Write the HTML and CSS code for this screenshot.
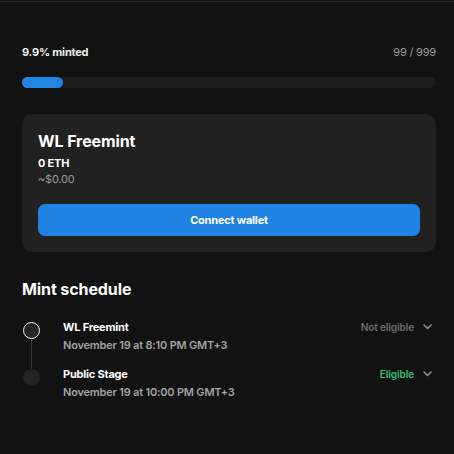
FILE: index.html
```html
<!DOCTYPE html>
<html>
<head>
<meta charset="utf-8">
<link rel="stylesheet" href="styles.css">
</head>
<body>
<div class="topline"></div>
<main class="page">
  <div class="progress-head">
    <span class="minted">9.9% minted</span>
    <span class="count">99 / 999</span>
  </div>
  <div class="bar"><div class="bar-fill" style="width:10%"></div></div>

  <section class="card">
    <h2 class="card-title">WL Freemint</h2>
    <div class="price">0 ETH</div>
    <div class="usd">~$0.00</div>
    <button class="connect">Connect wallet</button>
  </section>

  <h2 class="schedule-title">Mint schedule</h2>
  <ul class="timeline">
    <li class="stage">
      <div class="marker"><span class="dot dot-active"></span><span class="line"></span></div>
      <div class="stage-info">
        <div class="stage-name">WL Freemint</div>
        <div class="stage-date">November 19 at 8:10 PM GMT+3</div>
      </div>
      <div class="stage-status muted">Not eligible
        <svg class="chev" width="9" height="6" viewBox="0 0 9 6"><path d="M1 1l3.5 3.5L8 1" fill="none" stroke="#8a8a8a" stroke-width="1.6" stroke-linecap="round" stroke-linejoin="round"/></svg>
      </div>
    </li>
    <li class="stage">
      <div class="marker"><span class="dot"></span></div>
      <div class="stage-info">
        <div class="stage-name">Public Stage</div>
        <div class="stage-date">November 19 at 10:00 PM GMT+3</div>
      </div>
      <div class="stage-status green">Eligible
        <svg class="chev" width="9" height="6" viewBox="0 0 9 6"><path d="M1 1l3.5 3.5L8 1" fill="none" stroke="#8a8a8a" stroke-width="1.6" stroke-linecap="round" stroke-linejoin="round"/></svg>
      </div>
    </li>
  </ul>
</main>
</body>
</html>
```

FILE: styles.css
```css
* { box-sizing: border-box; }
html, body {
  margin: 0;
  background: #121212;
  font-family: Inter, "Noto Sans", sans-serif;
  color: #fff;
}
.topline {
  margin-top: 1px;
  height: 1px;
  background: #2c2c2c;
}
.page {
  padding: 0 18px 0 22px;
}
.progress-head {
  display: flex;
  justify-content: space-between;
  align-items: center;
  margin-top: 43px;
  font-size: 11px;
  line-height: 14px;
  letter-spacing: -0.2px;
}
.minted { font-weight: 700; color: #f2f2f2; }
.count { color: #9a9a9a; }
.bar {
  margin-top: 18px;
  height: 11px;
  border-radius: 6px;
  background: #1c1c1c;
}
.bar-fill {
  height: 100%;
  border-radius: 6px;
  background: #2284e4;
}
.card {
  margin-top: 26px;
  background: #212121;
  border-radius: 10px;
  padding: 16px 16px 16px 16px;
}
.card-title {
  margin: 0;
  font-size: 16px;
  line-height: 22px;
  font-weight: 700;
  letter-spacing: -0.1px;
}
.price {
  margin-top: 4px;
  font-size: 11px;
  line-height: 14px;
  font-weight: 700;
  letter-spacing: -0.2px;
}
.usd {
  margin-top: 2px;
  font-size: 11px;
  line-height: 14px;
  color: #9a9a9a;
  letter-spacing: -0.2px;
}
.connect {
  display: block;
  width: 100%;
  margin-top: 18px;
  height: 32px;
  border: 0;
  border-radius: 7px;
  background: #2082e3;
  color: #fff;
  font-family: inherit;
  font-size: 11px;
  font-weight: 700;
  letter-spacing: -0.2px;
}
.schedule-title {
  margin: 26px 0 0;
  font-size: 16px;
  line-height: 22px;
  font-weight: 700;
  letter-spacing: -0.1px;
}
.timeline {
  list-style: none;
  margin: 20px 0 0;
  padding: 0;
}
.stage {
  display: flex;
  align-items: flex-start;
  height: 47px;
}
.marker {
  width: 18px;
  height: 100%;
  margin-top: 2px;
  display: flex;
  flex-direction: column;
  align-items: center;
  flex: none;
}
.dot {
  width: 17px;
  height: 17px;
  border-radius: 50%;
  background: #232323;
  flex: none;
}
.dot-active {
  background: #262626;
  border: 1.5px solid #f2f2f2;
}
.line {
  width: 1px;
  flex: 1;
  background: #3a3a3a;
}
.stage-info {
  margin-left: 23px;
  flex: 1;
}
.stage-name {
  font-size: 11px;
  line-height: 14px;
  font-weight: 700;
  letter-spacing: -0.2px;
}
.stage-date {
  margin-top: 4px;
  font-size: 11px;
  line-height: 14px;
  font-weight: 600;
  color: #a3a3a3;
  letter-spacing: -0.2px;
}
.stage-status {
  display: flex;
  align-items: center;
  gap: 9px;
  font-size: 10px;
  line-height: 14px;
  font-weight: 600;
  margin-right: 4px;
  letter-spacing: -0.1px;
}
.muted { color: #6c6c6c; }
.green { color: #34c072; }
.chev { flex: none; }
```
